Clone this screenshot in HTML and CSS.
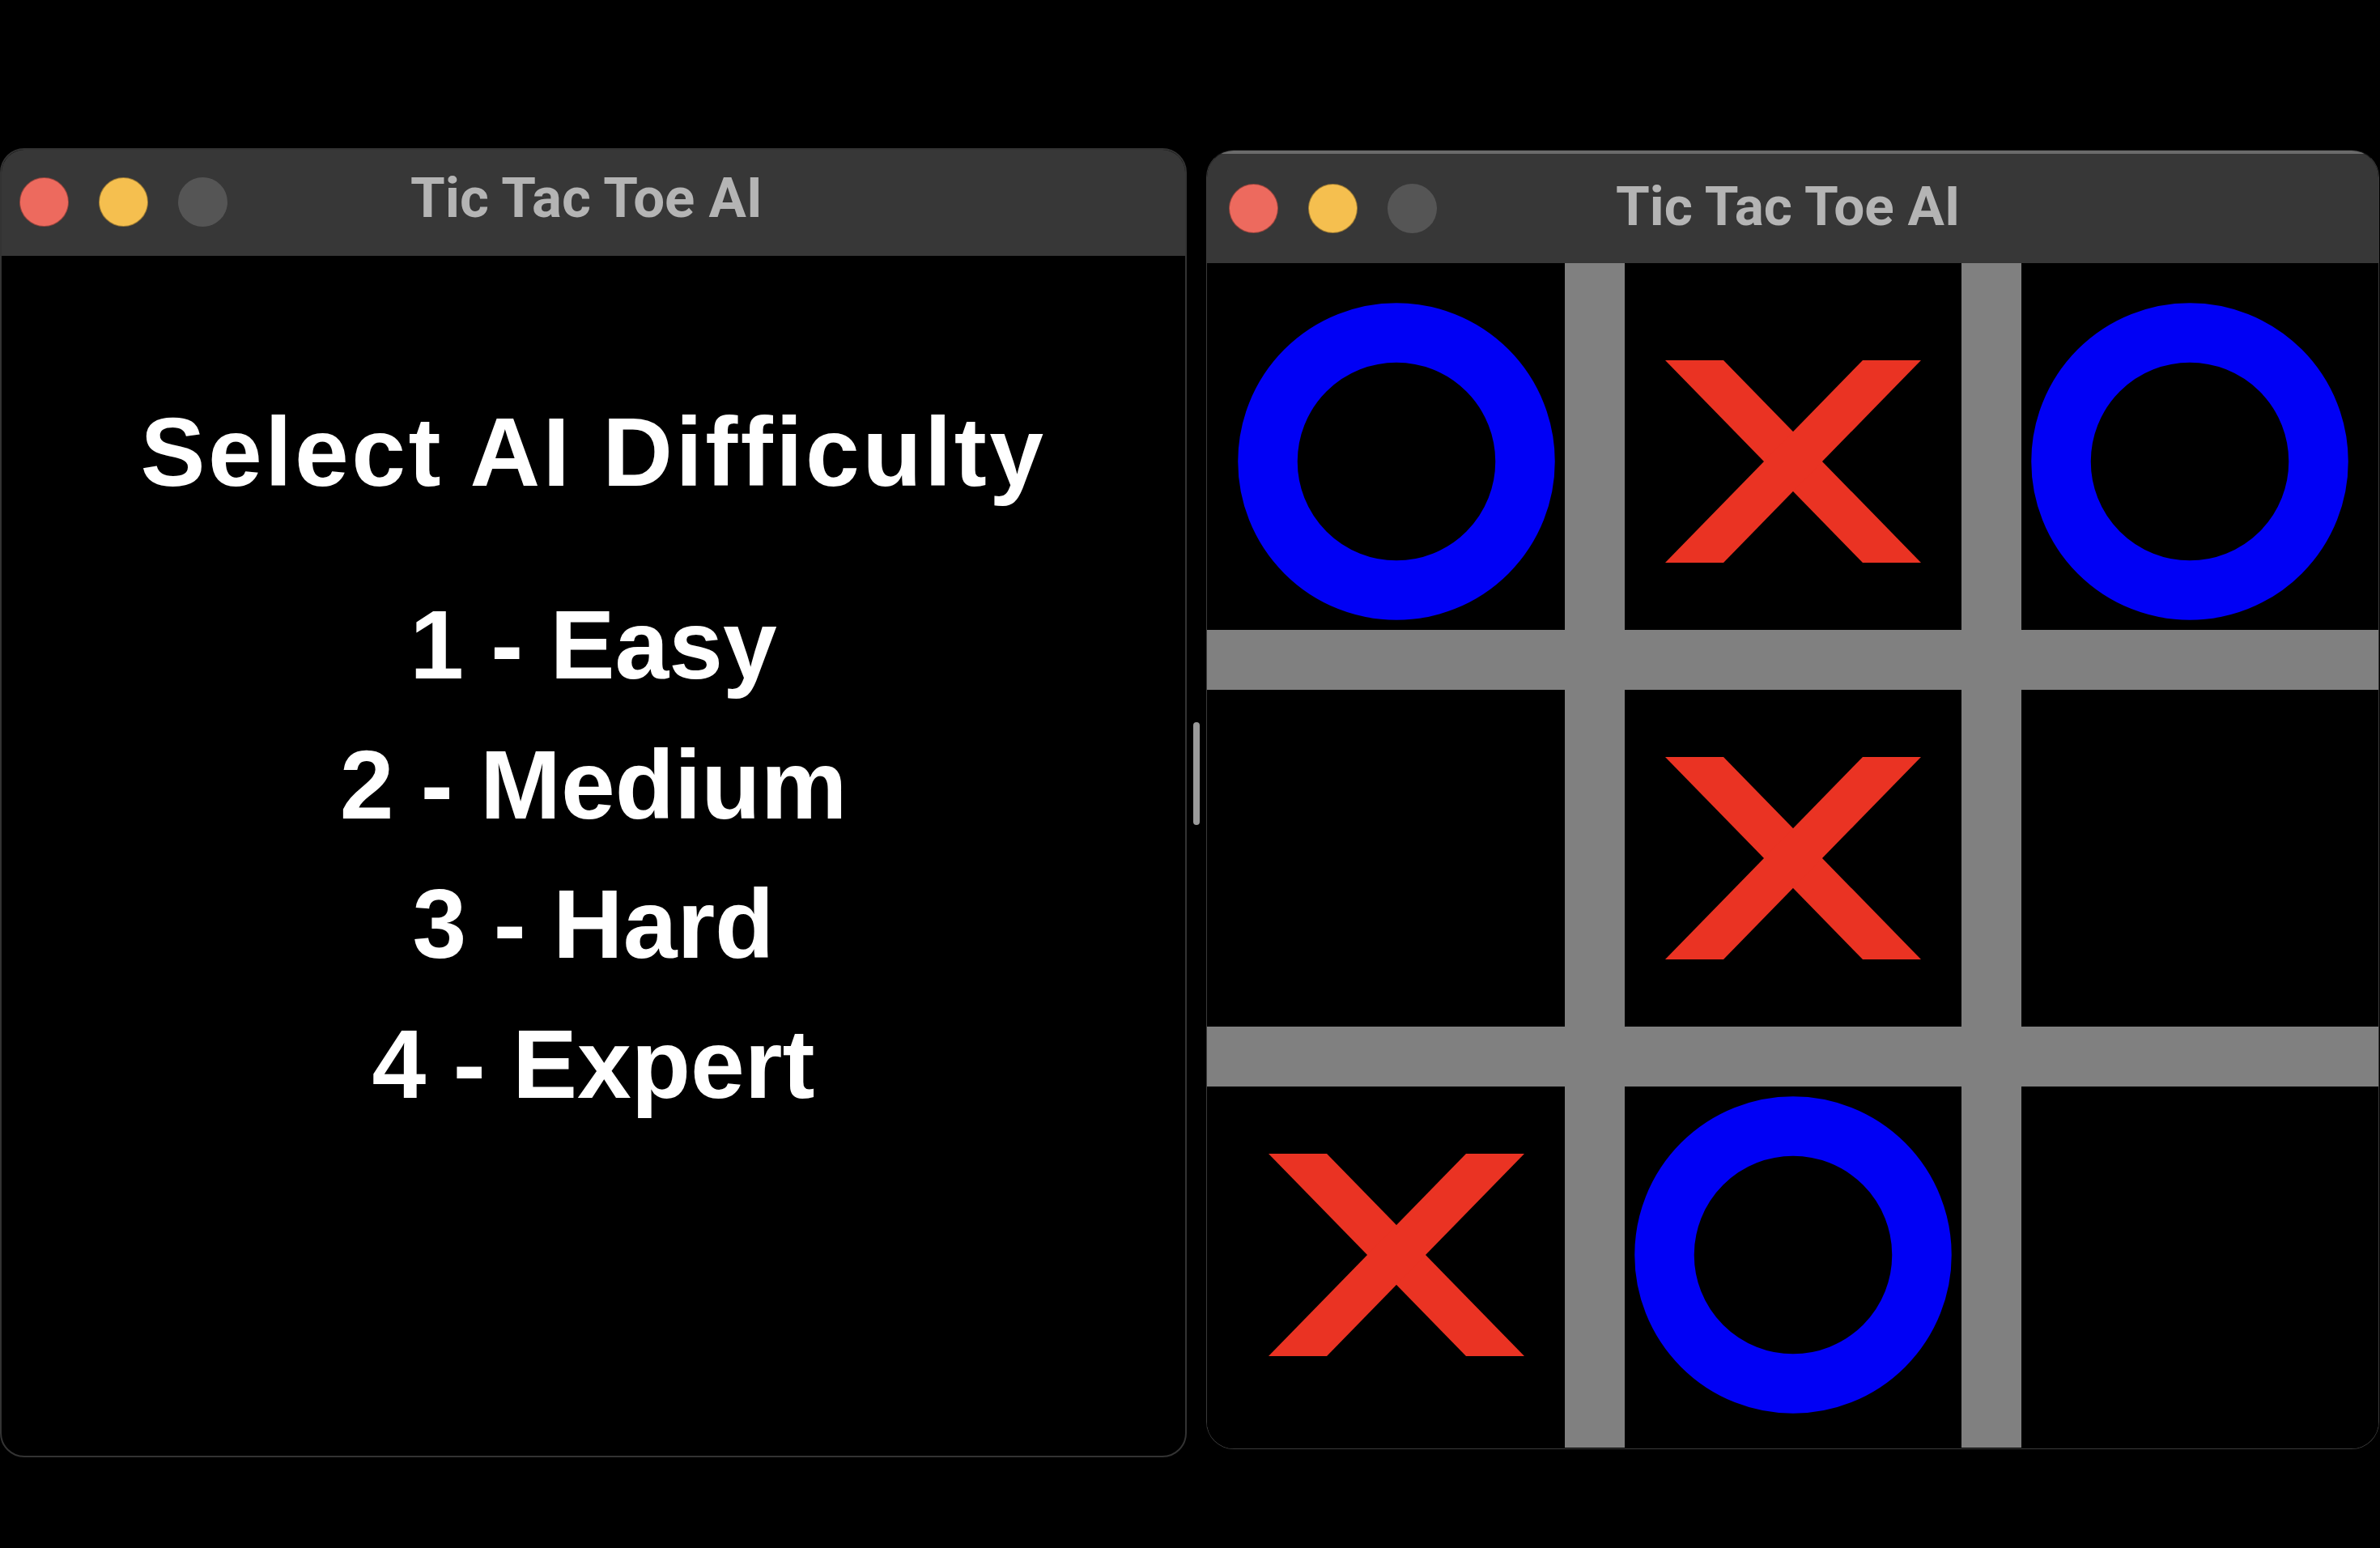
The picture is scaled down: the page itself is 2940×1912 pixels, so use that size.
FILE: index.html
```html
<!DOCTYPE html>
<html lang="en">
<head>
<meta charset="utf-8">
<title>Tic Tac Toe AI</title>
<link rel="stylesheet" href="styles.css">
</head>
<body>
<div class="desk">
  <section class="win win-left">
    <header class="titlebar tb-left">
      <div class="lights">
        <span class="light red"></span>
        <span class="light yellow"></span>
        <span class="light gray"></span>
      </div>
      <div class="title">Tic Tac Toe AI</div>
    </header>
    <main class="menu">
      <h1 class="menu-title">Select AI Difficulty</h1>
      <ul class="options">
        <li>1 - Easy</li>
        <li>2 - Medium</li>
        <li>3 - Hard</li>
        <li>4 - Expert</li>
      </ul>
    </main>
  </section>

  <div class="divider"><span class="handle"></span></div>

  <section class="win win-right">
    <header class="titlebar tb-right">
      <div class="lights">
        <span class="light red"></span>
        <span class="light yellow"></span>
        <span class="light gray"></span>
      </div>
      <div class="title">Tic Tac Toe AI</div>
    </header>
    <div class="board">
      <svg class="board-svg" width="1447" height="1463" viewBox="11 0 1447 1463" xmlns="http://www.w3.org/2000/svg">
        <rect x="0" y="0" width="1470" height="1470" fill="#000"/>
        <g fill="#808080">
          <rect x="453" y="0" width="74" height="1470"/>
          <rect x="943" y="0" width="74" height="1470"/>
          <rect x="0" y="453" width="1470" height="74"/>
          <rect x="0" y="943" width="1470" height="74"/>
        </g>
        <g fill="none" stroke="#0000f5" stroke-width="73.5">
          <circle cx="245" cy="245" r="159"/>
          <circle cx="1225" cy="245" r="159"/>
          <circle cx="735" cy="1225" r="159"/>
        </g>
        <g fill="#ea3323">
          <polygon points="577,120 649,120 893,370 821,370"/>
          <polygon points="821,120 893,120 649,370 577,370"/>
          <polygon points="577,610 649,610 893,860 821,860"/>
          <polygon points="821,610 893,610 649,860 577,860"/>
          <polygon points="87,1100 159,1100 403,1350 331,1350"/>
          <polygon points="331,1100 403,1100 159,1350 87,1350"/>
        </g>
      </svg>
    </div>
  </section>
</div>
</body>
</html>
```

FILE: styles.css
```css
html, body {
  margin: 0;
  padding: 0;
  background: #000;
}

body {
  width: 2940px;
  height: 1912px;
  overflow: hidden;
}

.desk {
  display: flex;
  align-items: flex-start;
  width: 2940px;
  height: 1912px;
}

.win {
  box-sizing: border-box;
  background: #000;
  overflow: hidden;
  display: flex;
  flex-direction: column;
}

.win-left {
  margin-top: 183px;
  width: 1466px;
  height: 1617px;
  border: 2px solid #333;
  border-radius: 30px;
}

.win-right {
  margin-top: 185px;
  width: 1449px;
  height: 1605px;
  border: 1px solid #3a3a3a;
  border-top-color: #1a1a1a;
  border-radius: 34px;
}

.titlebar {
  flex: none;
  display: flex;
  align-items: center;
  background: #373737;
  box-sizing: border-box;
}

.tb-left {
  height: 131px;
  padding-left: 22px;
}

.tb-right {
  height: 139px;
  padding-left: 27px;
  box-shadow: inset 0 4px 0 #6b6b6b;
}

.lights {
  display: flex;
  gap: 37px;
}

.light {
  display: block;
  width: 61px;
  height: 61px;
  border-radius: 50%;
  box-sizing: border-box;
  border: 1px solid rgba(0, 0, 0, 0.35);
}

.light.red { background: #ed6a5e; }
.light.yellow { background: #f5bf4f; }
.light.gray { background: #555555; border-color: transparent; }

.tb-left .light { margin-top: -3px; }
.tb-right .light { margin-top: 4px; }

.title {
  font-family: Roboto, "Liberation Sans", Arial, sans-serif;
  font-weight: 700;
  color: #b4b4b4;
  line-height: 1;
}

.tb-left .title { font-size: 69px; margin-left: 226px; margin-top: -12px; }
.tb-right .title { font-size: 67.5px; margin-left: 221px; margin-top: -2px; }

.menu {
  flex: 1;
  display: flex;
  flex-direction: column;
  align-items: center;
  padding-top: 151px;
  font-family: "Liberation Sans", Arial, Helvetica, sans-serif;
  font-weight: 700;
  color: #fff;
}

.menu-title {
  margin: 0;
  font-size: 120px;
  line-height: 183px;
  font-weight: 700;
  letter-spacing: 3.5px;
}

.options {
  list-style: none;
  margin: 60px 0 0 0;
  padding: 0;
  display: flex;
  flex-direction: column;
  align-items: center;
  font-size: 120px;
  line-height: 172.5px;
}

.divider {
  flex: none;
  width: 24px;
  align-self: stretch;
  display: flex;
  justify-content: center;
}

.handle {
  display: block;
  margin-top: 892px;
  width: 8px;
  height: 127px;
  border-radius: 4px;
  background: #9a9a9a;
}

.board {
  flex: 1;
  overflow: hidden;
  background: #000;
}

.board-svg {
  display: block;
}
```
